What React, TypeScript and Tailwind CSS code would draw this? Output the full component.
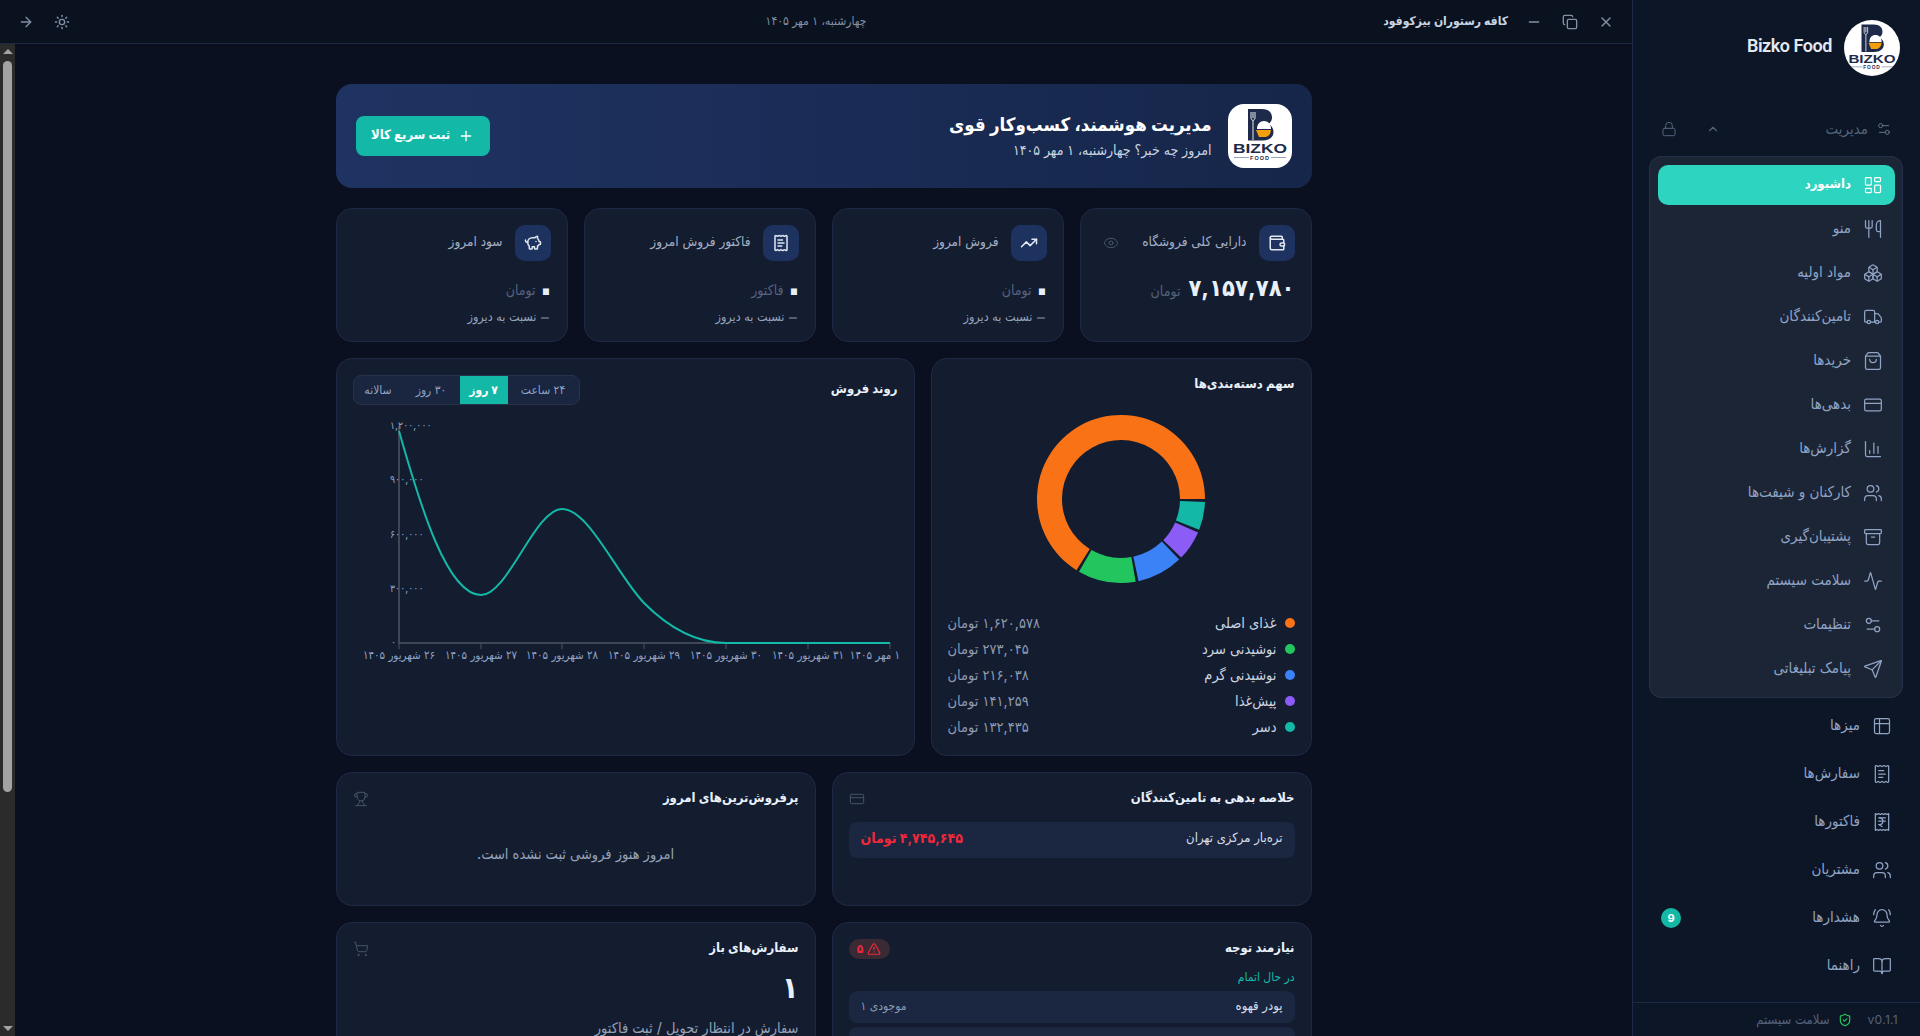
import React from "react";
import {
  Activity, Archive, ArrowRight, BellRing, BookOpen, Boxes, ChartColumn, ChevronUp, Copy, CreditCard, Eye,
  LayoutDashboard, Lock, Minus, PiggyBank, Plus, ReceiptIndianRupee, ReceiptText, Send, Settings2, ShieldCheck,
  ShoppingBag, ShoppingCart, Sun, Table2, TrendingUp, TriangleAlert, Trophy, Truck, Users, Utensils, Wallet, X,
} from "lucide-react";

function LogoArt() {
  return (
    <svg viewBox="0 0 64 64" className="h-full w-full">
      <path d="M20 5h14c7 0 10 4 10 8.5 0 3-1.5 5-3.5 6.5 3 1.5 5 4 5 8 0 5-4 8.500-11 8.500H20z" fill="#1e2a4a" />
      <path d="M23 8v6M25 8v6M27 8v6M23 14c0 2 2 2 2 3v19M27 14c0 2-2 2-2 3" stroke="#fff" strokeWidth="0.9" fill="none" />
      <path d="M29 25c0-5 3-8 7-8s7 3 7 8z" fill="#fff" />
      <path d="M28 26h15c-.5 4-2 6-5 7h-7z" fill="#f59e0b" />
      <text x="32" y="49" textAnchor="middle" fontFamily="Liberation Sans, sans-serif" fontWeight="700" fontSize="12.5" textLength="54" lengthAdjust="spacingAndGlyphs" fill="#1e2a4a">BIZKO</text>
      <text x="32" y="56" textAnchor="middle" fontFamily="Liberation Sans, sans-serif" fontWeight="700" fontSize="5.500" letterSpacing="1" fill="#1e2a4a">FOOD</text>
      <path d="M6 53.500h15M43 53.500h15" stroke="#9aa3b5" strokeWidth="1" />
    </svg>
  );
}

const groupItems = [
  { label: "داشبورد", Icon: LayoutDashboard, active: true },
  { label: "منو", Icon: Utensils },
  { label: "مواد اولیه", Icon: Boxes },
  { label: "تامین‌کنندگان", Icon: Truck },
  { label: "خریدها", Icon: ShoppingBag },
  { label: "بدهی‌ها", Icon: CreditCard },
  { label: "گزارش‌ها", Icon: ChartColumn },
  { label: "کارکنان و شیفت‌ها", Icon: Users },
  { label: "پشتیبان‌گیری", Icon: Archive },
  { label: "سلامت سیستم", Icon: Activity },
  { label: "تنظیمات", Icon: Settings2 },
  { label: "پیامک تبلیغاتی", Icon: Send },
];

const lowerItems = [
  { label: "میزها", Icon: Table2 },
  { label: "سفارش‌ها", Icon: ReceiptText },
  { label: "فاکتورها", Icon: ReceiptIndianRupee },
  { label: "مشتریان", Icon: Users },
  { label: "هشدارها", Icon: BellRing, badge: "9" },
  { label: "راهنما", Icon: BookOpen },
];

function Sidebar() {
  return (
    <aside className="flex h-full w-[288px] shrink-0 flex-col border-l border-[#1e2a45] bg-[#0d1626]">
      <div className="flex h-[96px] items-center gap-3 px-5">
        <div className="h-14 w-14 overflow-hidden rounded-full bg-white">
          <LogoArt />
        </div>
        <span dir="ltr" className="pb-[5px] font-[Roboto,sans-serif] text-[18px] font-semibold tracking-tight text-[#e2e8f0]">Bizko Food</span>
      </div>
      <div className="mt-[13px] flex h-10 items-center px-[28px] text-[#55637c]">
        <Settings2 size={16} strokeWidth={1.5} className="text-[#64748b]" />
        <span className="mr-2 text-[15px]">مدیریت</span>
        <ChevronUp size={14} className="mr-auto" />
        <Lock size={16} strokeWidth={1.5} className="mr-[29px]" />
      </div>
      <div className="mt-[7px] mr-[17px] flex w-[254px] flex-col gap-1 rounded-xl border border-[#26314b] bg-[#1c2536] py-2 pr-[7px] pl-2">
        {groupItems.map(({ label, Icon, active }) => (
          <div
            key={label}
            className={
              active
                ? "flex h-10 items-center gap-3 rounded-[10px] bg-[#2dd4bf] px-3 text-[13px] font-semibold text-white"
                : "flex h-10 items-center gap-3 rounded-[10px] px-3 text-[15px] text-[#8fa3c4]"
            }
          >
            <Icon size={20} strokeWidth={1.5} />
            <span className="pb-0.5">{label}</span>
          </div>
        ))}
      </div>
      <div className="mt-2 flex flex-col gap-2 px-4">
        {lowerItems.map(({ label, Icon, badge }) => (
          <div key={label} className="flex h-10 items-center gap-3 px-3 text-[15px] text-[#8fa3c4]">
            <Icon size={20} strokeWidth={1.5} />
            <span className="pb-0.5">{label}</span>
            {badge && (
              <span className="mr-auto flex h-5 w-5 items-center justify-center rounded-full bg-[#14b8a6] text-[11px] font-bold text-white">{badge}</span>
            )}
          </div>
        ))}
      </div>
      <div className="mt-auto flex h-[34px] items-center gap-4 border-t border-[#1e2a45] px-[22px] text-[13px] text-[#55637c]">
        <span dir="ltr" className="text-xs tracking-wide">v0.1.1</span>
        <span className="flex items-center gap-2">
          <ShieldCheck size={14} className="text-[#22c55e]" />
          سلامت سیستم
        </span>
      </div>
    </aside>
  );
}

function TitleBar() {
  return (
    <header className="flex h-11 shrink-0 items-center border-b border-[#1e2a45] bg-[#0a1220] px-[18px]">
      <div className="flex flex-1 items-center gap-5">
        <X size={16} className="text-[#8290a6]" />
        <Copy size={16} className="text-[#8290a6]" />
        <Minus size={16} className="text-[#8290a6]" />
        <span className="-mr-[2px] pb-0.5 text-xs font-semibold text-[#cbd5e1]">کافه رستوران بیزکوفود</span>
      </div>
      <div className="pb-0.5 text-xs text-[#8290a6]">چهارشنبه، ۱ مهر ۱۴۰۵</div>
      <div className="flex flex-1 items-center justify-end gap-5 text-[#8290a6]">
        <Sun size={16} />
        <ArrowRight size={16} />
      </div>
    </header>
  );
}

function Hero() {
  return (
    <section className="flex h-[104px] items-center gap-4 rounded-2xl bg-linear-to-l from-[#16264a] to-[#1f3362] px-5">
      <div className="h-16 w-16 overflow-hidden rounded-2xl bg-white">
        <LogoArt />
      </div>
      <div>
        <h1 className="text-[18.5px] font-bold leading-7 text-white">مدیریت هوشمند، کسب‌وکار قوی</h1>
        <p className="text-sm leading-6 text-[#cbd5e1]">امروز چه خبر؟ چهارشنبه، ۱ مهر ۱۴۰۵</p>
      </div>
      <button className="mr-auto flex h-10 w-[134px] items-center justify-center gap-2 rounded-lg bg-[#14b8a6] text-[13px] font-semibold text-white">
        <Plus size={16} />
        <span className="pb-0.5">ثبت سریع کالا</span>
      </button>
    </section>
  );
}

function StatCard({ label, Icon, value, unit, compare, eye }: { label: string; Icon: React.ElementType; value: string; unit: string; compare?: boolean; eye?: boolean }) {
  const zero = value === "۰";
  return (
    <div className="h-[134px] rounded-2xl border border-[#1e2a45] bg-[#141c30] p-4">
      <div className="flex items-center gap-3">
        <div className="flex h-9 w-9 items-center justify-center rounded-[10px] bg-[#1e3260] text-[#e2e8f0]">
          <Icon size={18} />
        </div>
        <span className="whitespace-nowrap pb-1 text-[13.5px] text-[#a3b0c4]">{label}</span>
        {eye && <Eye size={16} strokeWidth={1.5} className="mr-auto ml-1.5 text-[#475569]" />}
      </div>
      {zero ? (
        <div className="mt-[9px] flex h-9 items-center gap-1.5">
          <span className="flex w-[9px] justify-center text-[38px] font-bold leading-9 text-[#e8f0fa]">{value}</span>
          <span className="pt-[3px] text-sm text-[#55637c]">{unit}</span>
        </div>
      ) : (
        <div className="mt-[9px] flex h-9 items-baseline gap-2">
          <span className="text-[23.5px] font-bold leading-9 text-[#e8f0fa]">{value}</span>
          <span className="text-sm text-[#55637c]">{unit}</span>
        </div>
      )}
      {compare && (
        <div className="mt-[2px] flex items-center gap-[2px] text-[12.5px] text-[#94a3b8]">
          <Minus size={12} />
          <span className="pb-0.5">نسبت به دیروز</span>
        </div>
      )}
    </div>
  );
}

const xs = [399, 481, 562, 644, 726, 808, 890];
const xLabels: [number, string][] = [
  [399, "۲۶ شهریور ۱۴۰۵"], [481, "۲۷ شهریور ۱۴۰۵"], [562, "۲۸ شهریور ۱۴۰۵"], [644, "۲۹ شهریور ۱۴۰۵"],
  [726, "۳۰ شهریور ۱۴۰۵"], [808, "۳۱ شهریور ۱۴۰۵"], [875, "۱ مهر ۱۴۰۵"],
];
const yLabels: [number, string][] = [[426, "۱,۲۰۰,۰۰۰"], [480, "۹۰۰,۰۰۰"], [535, "۶۰۰,۰۰۰"], [589, "۳۰۰,۰۰۰"], [643, "۰"]];

function LineChart() {
  return (
    <svg className="mt-[9px] block h-[250px] w-full overflow-visible" viewBox="353 414 545 250">
      <path d="M399 426V643H890" fill="none" stroke="#4b5563" strokeWidth="1.500" />
      {xs.map((x) => (
        <path key={x} d={`M${x} 643v6`} stroke="#4b5563" strokeWidth="1" />
      ))}
      <path
        d="M399 431C420 505 447 595 481 595C508 595 535 509 562 509C589 509 617 575 644 603C671 630 699 643 726 643L890 643"
        fill="none" stroke="#14b8a6" strokeWidth="2"
      />
      {yLabels.map(([y, t]) => (
        <text key={t} x={y === 643 ? 391 : 390} y={y + 3} fontSize="10.5" fill="#8fa3c4" style={{ direction: "ltr" }}>{t}</text>
      ))}
      {xLabels.map(([x, t]) => (
        <text key={t} x={x} y={659} fontSize="11.5" textAnchor="middle" fill="#8fa3c4" style={{ direction: "rtl" }}>{t}</text>
      ))}
    </svg>
  );
}

function SalesCard() {
  return (
    <div className="flex-1 rounded-2xl border border-[#1e2a45] bg-[#141c30] p-4">
      <div className="flex h-[30px] items-center justify-between">
        <h2 className="pb-0.5 text-[13px] font-semibold text-[#e8f0fa]">روند فروش</h2>
        <div className="flex h-[30px] items-stretch overflow-hidden rounded-lg border border-[#26314b] bg-[#1a2540] text-xs text-[#8fa3c4]">
          <span className="flex w-[71px] items-center justify-center">۲۴ ساعت</span>
          <span className="flex w-[48px] items-center justify-center bg-[#14b8a6] font-bold text-white">۷ روز</span>
          <span className="flex w-[57px] items-center justify-center">۳۰ روز</span>
          <span className="flex w-[49px] items-center justify-center">سالانه</span>
        </div>
      </div>
      <LineChart />
    </div>
  );
}

const cats = [
  { name: "غذای اصلی", val: "۱,۶۲۰,۵۷۸ تومان", n: 1620578, c: "#f97316", dot: "bg-[#f97316]" },
  { name: "نوشیدنی سرد", val: "۲۷۳,۰۴۵ تومان", n: 273045, c: "#22c55e", dot: "bg-[#22c55e]" },
  { name: "نوشیدنی گرم", val: "۲۱۶,۰۳۸ تومان", n: 216038, c: "#3b82f6", dot: "bg-[#3b82f6]" },
  { name: "پیش‌غذا", val: "۱۴۱,۲۵۹ تومان", n: 141259, c: "#8b5cf6", dot: "bg-[#8b5cf6]" },
  { name: "دسر", val: "۱۳۲,۴۳۵ تومان", n: 132435, c: "#14b8a6", dot: "bg-[#14b8a6]" },
];

function Donut() {
  const total = cats.reduce((s, c) => s + c.n, 0);
  const cx = 90, cy = 90, R = 84, r = 59, pad = 2;
  const avail = 360 - pad * cats.length;
  let a = 0;
  const pt = (rad: number, deg: number) => {
    const t = (deg * Math.PI) / 180;
    return `${(cx + rad * Math.cos(t)).toFixed(2)} ${(cy - rad * Math.sin(t)).toFixed(2)}`;
  };
  return (
    <svg viewBox="0 0 180 180" className="mx-auto mt-[16px] block h-[180px] w-[180px]">
      {cats.map((c) => {
        const sweep = (c.n / total) * avail;
        const s = a, e = a + sweep;
        a = e + pad;
        const large = sweep > 180 ? 1 : 0;
        return (
          <path key={c.name} fill={c.c} d={`M${pt(R, s)}A${R} ${R} 0 ${large} 0 ${pt(R, e)}L${pt(r, e)}A${r} ${r} 0 ${large} 1 ${pt(r, s)}Z`} />
        );
      })}
    </svg>
  );
}

function CategoryCard() {
  return (
    <div className="w-[381px] shrink-0 rounded-2xl border border-[#1e2a45] bg-[#141c30] p-4">
      <h2 className="-mt-[2px] text-[13px] font-semibold leading-5 text-[#e8f0fa]">سهم دسته‌بندی‌ها</h2>
      <Donut />
      <div className="mt-[21px] flex flex-col">
        {cats.map((c) => (
          <div key={c.name} className="flex h-[26px] items-center justify-between">
            <span className="flex items-center gap-2 text-[14.5px] text-[#cbd5e1]">
              <i className={`block h-2.5 w-2.5 rounded-full ${c.dot}`} />
              {c.name}
            </span>
            <span className="text-[14.5px] text-[#8e9bb0]">{c.val}</span>
          </div>
        ))}
      </div>
    </div>
  );
}

function Panel({ title, Icon, children }: { title: string; Icon: React.ElementType; children: React.ReactNode }) {
  return (
    <div className="rounded-2xl border border-[#1e2a45] bg-[#141c30] p-4">
      <div className="flex h-5 items-center justify-between">
        <h3 className="pb-0.5 text-[13px] font-semibold text-[#e8f0fa]">{title}</h3>
        <Icon size={16} strokeWidth={1.5} className="text-[#475569]" />
      </div>
      {children}
    </div>
  );
}

const attention = ["پودر قهوه", "شکر", "شیر", "نان برگر", "پنیر گودا"];

function Main() {
  return (
    <main className="flex min-h-0 flex-1 bg-[#0a101f]">
      <div className="min-w-0 flex-1 overflow-hidden">
        <div className="mx-auto flex w-[976px] flex-col gap-4 pt-10 pb-6">
          <div className="mb-1">
            <Hero />
          </div>
          <div className="grid grid-cols-4 gap-4">
            <StatCard label="دارایی کلی فروشگاه" Icon={Wallet} value="۷,۱۵۷,۷۸۰" unit="تومان" eye />
            <StatCard label="فروش امروز" Icon={TrendingUp} value="۰" unit="تومان" compare />
            <StatCard label="فاکتور فروش امروز" Icon={ReceiptText} value="۰" unit="فاکتور" compare />
            <StatCard label="سود امروز" Icon={PiggyBank} value="۰" unit="تومان" compare />
          </div>
          <div className="flex h-[398px] gap-4">
            <CategoryCard />
            <SalesCard />
          </div>
          <div className="grid grid-cols-2 gap-4">
            <div className="h-[134px] [&>div]:h-full">
              <Panel title="خلاصه بدهی به تامین‌کنندگان" Icon={CreditCard}>
                <div className="mt-[13px] flex h-9 items-center justify-between rounded-lg bg-[#1b2640] px-3">
                  <span className="pb-1 text-[13px] text-[#d5deea]">تره‌بار مرکزی تهران</span>
                  <span className="pb-1 text-sm font-bold text-[#f0283c]">۴,۷۴۵,۶۴۵ تومان</span>
                </div>
              </Panel>
            </div>
            <div className="h-[134px] [&>div]:h-full">
              <Panel title="پرفروش‌ترین‌های امروز" Icon={Trophy}>
                <p className="mt-[34px] text-center text-[14.5px] text-[#94a3b8]">امروز هنوز فروشی ثبت نشده است.</p>
              </Panel>
            </div>
            <div className="rounded-2xl border border-[#1e2a45] bg-[#141c30] p-4">
              <div className="flex h-5 items-center justify-between">
                <h3 className="pb-0.5 text-[13px] font-semibold text-[#e8f0fa]">نیازمند توجه</h3>
                <span className="flex h-5 w-[41px] items-center justify-center gap-1 rounded-full bg-[#3a2a33] text-xs font-bold text-[#f0283c]">
                  <TriangleAlert size={14} />
                  ۵
                </span>
              </div>
              <div className="mt-[8px] text-xs leading-5 text-[#14b8a6]">در حال اتمام</div>
              <div className="mt-[4px] flex flex-col gap-1">
                {attention.map((a, i) => (
                  <div key={a} className="flex h-8 items-center justify-between rounded-lg bg-[#1b2640] px-3">
                    <span className="pb-0.5 text-[13px] text-[#d5deea]">{a}</span>
                    <span className="pb-0.5 text-xs text-[#8e9bb0]">موجودی {i === 0 ? "۱" : "۲"}</span>
                  </div>
                ))}
              </div>
            </div>
            <div className="h-[134px] [&>div]:h-full">
              <Panel title="سفارش‌های باز" Icon={ShoppingCart}>
                <div className="mt-2 text-[30px] font-bold leading-10 text-[#e8f0fa]">۱</div>
                <p className="mt-[10px] text-[14.5px] text-[#94a3b8]">سفارش در انتظار تحویل / ثبت فاکتور</p>
              </Panel>
            </div>
          </div>
        </div>
      </div>
      <div className="flex w-[15px] shrink-0 flex-col items-center bg-[#2b2b2b]">
        <span className="mt-[5px] h-0 w-0 border-x-[5px] border-b-[5px] border-x-transparent border-b-[#a3a3a3]" />
        <span className="mt-[7px] h-[731px] w-[9px] rounded-full bg-[#a3a3a3]" />
        <span className="mt-auto mb-[5px] h-0 w-0 border-x-[5px] border-t-[5px] border-x-transparent border-t-[#a3a3a3]" />
      </div>
    </main>
  );
}

export default function App() {
  return (
    <div dir="rtl" className="flex h-screen w-full overflow-hidden bg-[#0a101f] font-[Inter,'DejaVu_Sans_Condensed','DejaVu_Sans',sans-serif]">
      <Sidebar />
      <div className="flex min-w-0 flex-1 flex-col">
        <TitleBar />
        <Main />
      </div>
    </div>
  );
}
